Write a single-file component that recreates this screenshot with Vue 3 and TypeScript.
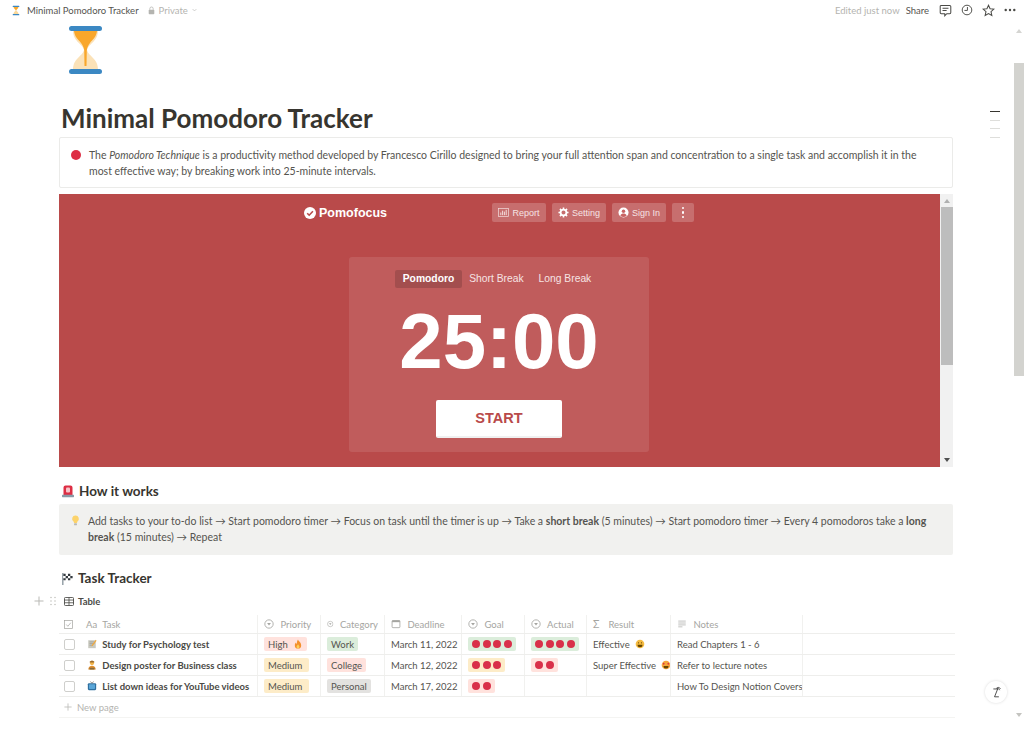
<template>
  <div class="page">
    <svg class="defs" width="0" height="0" aria-hidden="true">
      <symbol id="e-memo" viewBox="0 0 12 12">
        <rect x="1.500" y="1.500" width="9" height="9.500" fill="#c9c9c0" />
        <path d="M3 3.500h6M3 5.500h6M3 7.500h4" stroke="#8f8f88" stroke-width=".7" />
        <path d="M10.500 1 6 7l-.6 1.800L7 8l4.500-6z" fill="#f2a93b" />
      </symbol>
      <symbol id="e-person" viewBox="0 0 12 12">
        <circle cx="6" cy="3.600" r="2.600" fill="#f3b54a" />
        <path d="M3.300 3h5.400V1.800L6 .6 3.300 1.800z" fill="#9a6a2c" />
        <path d="M1.500 11.500c0-3 2-4.600 4.500-4.600s4.500 1.600 4.500 4.600z" fill="#e08f2e" />
        <rect x="3" y="9.300" width="6" height="2.200" fill="#8a6a3a" />
      </symbol>
      <symbol id="e-tv" viewBox="0 0 12 12">
        <rect x="1" y="2.600" width="10" height="8.400" rx="1.400" fill="#2f6f9f" />
        <rect x="2.400" y="4" width="7.200" height="5.600" rx=".8" fill="#5aa6d8" />
        <path d="M4 .8 6 2.600 8 .8" fill="none" stroke="#555" stroke-width=".8" />
      </symbol>
      <symbol id="e-fire" viewBox="0 0 12 12">
        <path d="M6 .6c.6 2.200 3.800 3.400 3.800 6.800A3.800 3.800 0 0 1 6 11.400a3.800 3.800 0 0 1-3.800-4c0-1.500.8-2.400 1.400-3.200.2 1 .6 1.500 1.100 1.700C4.500 4 5 2 6 .6z" fill="#f4902c" />
        <path d="M6 6.200c.5 1 1.700 1.600 1.700 3A1.700 1.700 0 0 1 6 11a1.700 1.700 0 0 1-1.700-1.800c0-1.300 1.200-1.700 1.700-3z" fill="#fcd05a" />
      </symbol>
      <symbol id="e-grin" viewBox="0 0 12 12">
        <circle cx="6" cy="6" r="5.200" fill="#f5bb41" />
        <circle cx="4.200" cy="4.600" r=".7" fill="#664500" />
        <circle cx="7.800" cy="4.600" r=".7" fill="#664500" />
        <path d="M3 6.800h6a3 3 0 0 1-6 0z" fill="#664500" />
      </symbol>
      <symbol id="e-love" viewBox="0 0 12 12">
        <circle cx="6" cy="6" r="5.200" fill="#f5a63b" />
        <path d="M2.300 4.300c.3-1.200 1.700-1.200 2 0 .1.800-1 1.600-1 1.600s-1.100-.8-1-1.600zM7.700 4.300c.3-1.200 1.700-1.200 2 0 .1.800-1 1.600-1 1.600s-1.100-.8-1-1.600z" fill="#dd2e44" />
        <path d="M3 7.200h6a3 3 0 0 1-6 0z" fill="#664500" />
      </symbol>
      <symbol id="i-select" viewBox="0 0 12 12">
        <circle cx="6" cy="6" r="5" fill="none" stroke="#a5a5a1" />
        <path d="M3.700 4.800h4.600L6 7.900z" fill="#a5a5a1" />
      </symbol>
      <symbol id="i-calendar" viewBox="0 0 12 12">
        <rect x="1.300" y="1.800" width="9.400" height="8.600" rx="1" fill="none" stroke="#a5a5a1" />
        <rect x="1.300" y="1.800" width="9.400" height="2" fill="#a5a5a1" />
      </symbol>
      <symbol id="i-lines" viewBox="0 0 12 12">
        <path d="M1.500 2.500h9M1.500 4.800h9M1.500 7.100h9M1.500 9.400h5" fill="none" stroke="#a5a5a1" stroke-width=".8" />
      </symbol>
    </svg>

    <header class="topbar">
      <div class="crumbs">
        <svg class="crumb-glass" viewBox="0 0 12 16" width="8" height="11">
          <path d="M2 2h8c0 4-3 4.500-3.600 6C7 9.500 10 10 10 14H2c0-4 3-4.500 3.600-6C5 6.500 2 6 2 2z" fill="#fbd99a" />
          <path d="M2.600 2.500h6.800C9.200 5 7 6 6 8 5 6 2.800 5 2.600 2.500z" fill="#f9a72b" />
          <rect x="1" y="1" width="10" height="1.700" rx=".8" fill="#3b88c3" />
          <rect x="1" y="13.300" width="10" height="1.700" rx=".8" fill="#3b88c3" />
        </svg>
        <span class="crumb-title">Minimal Pomodoro Tracker</span>
        <svg viewBox="0 0 10 12" width="7" height="9" class="crumb-lock">
          <path d="M2.600 5V3.400a2.400 2.400 0 0 1 4.800 0V5" fill="none" stroke="#b4b4b0" stroke-width="1.100" />
          <rect x="1" y="5" width="8" height="6.200" rx="1" fill="#b4b4b0" />
        </svg>
        <span class="crumb-private">Private</span>
        <svg viewBox="0 0 8 5" width="5" height="4"><path d="M1 1l3 3 3-3" fill="none" stroke="#b4b4b0" stroke-width="1" /></svg>
      </div>
      <div class="actions">
        <span class="edited">Edited just now</span>
        <span class="share">Share</span>
        <svg viewBox="0 0 14 14" width="13" height="13">
          <path d="M2.500 1.500h9a1.200 1.200 0 0 1 1.200 1.200v6.500a1.200 1.200 0 0 1-1.200 1.200H8.400L6.200 12.700v-2.300H2.500a1.200 1.200 0 0 1-1.200-1.200V2.700a1.200 1.200 0 0 1 1.200-1.200z" fill="none" stroke="#4a4a46" stroke-width="1.100" />
          <path d="M3.800 4.600h6.400M3.800 7h4.400" stroke="#4a4a46" stroke-width="1.100" />
        </svg>
        <svg viewBox="0 0 14 14" width="12" height="12">
          <circle cx="7" cy="7" r="5.600" fill="none" stroke="#4a4a46" stroke-width="1.100" />
          <path d="M7.500 3.500V7.500H4" fill="none" stroke="#4a4a46" stroke-width="1.100" />
        </svg>
        <svg viewBox="0 0 14 14" width="13" height="13">
          <path d="M7 1.300l1.700 3.800 4.100.4-3.100 2.700.9 4.100L7 10.200l-3.600 2.100.9-4.100L1.200 5.500l4.100-.4z" fill="none" stroke="#4a4a46" stroke-width="1.100" />
        </svg>
        <svg viewBox="0 0 14 4" width="12" height="4">
          <circle cx="2" cy="2" r="1.400" fill="#4a4a46" />
          <circle cx="7" cy="2" r="1.400" fill="#4a4a46" />
          <circle cx="12" cy="2" r="1.400" fill="#4a4a46" />
        </svg>
      </div>
    </header>

    <main class="doc">
      <svg class="page-icon" viewBox="0 0 33 50" width="33" height="50">
        <path d="M4 5h25c0 12-9 13-11 20 2 7 11 8 11 20H4c0-12 9-13 11-20C13 18 4 17 4 5z" fill="#fbe2b8" />
        <path d="M5 6h23c-.5 6-5 9-7 12-1.500 2-2.800 4-3.200 7l-.3 16h-2l-.3-16c-.4-3-1.700-5-3.200-7-2-3-6.500-6-7-12z" fill="#f9a72b" />
        <rect x="0" y="1" width="33" height="5" rx="2.500" fill="#3b88c3" />
        <rect x="0" y="44" width="33" height="5" rx="2.500" fill="#3b88c3" />
      </svg>

      <h1 class="title">Minimal Pomodoro Tracker</h1>

      <section class="callout outlined">
        <span class="red-dot"></span>
        <p>The <em>Pomodoro Technique</em> is a productivity method developed by Francesco Cirillo designed to bring your full attention span and concentration to a single task and accomplish it in the most effective way; by breaking work into 25-minute intervals.</p>
      </section>

      <section class="embed">
        <div class="pomo">
          <nav class="pomo-nav">
            <div class="pomo-logo">
              <svg viewBox="0 0 12 12" width="12" height="12">
                <circle cx="6" cy="6" r="6" fill="#fff" />
                <path d="M3.200 6.200 5.200 8.200 8.900 4.200" fill="none" stroke="#b94a4a" stroke-width="1.600" />
              </svg>
              <span>Pomofocus</span>
            </div>
            <div class="pomo-buttons">
              <span class="pomo-btn">
                <svg viewBox="0 0 12 10" width="11" height="9">
                  <rect x=".5" y=".5" width="11" height="9" fill="none" stroke="#f3dcdc" stroke-width=".8" />
                  <path d="M3 8V5M5 8V3M7 8V4M9 8V2" stroke="#f3dcdc" stroke-width="1.100" />
                </svg>
                Report
              </span>
              <span class="pomo-btn">
                <svg viewBox="0 0 12 12" width="11" height="11">
                  <circle cx="6" cy="6" r="3.200" fill="none" stroke="#fff" stroke-width="2" />
                  <path d="M6 .5v2M6 9.500v2M.5 6h2M9.500 6h2M2.100 2.100l1.400 1.400M8.500 8.500l1.400 1.400M2.100 9.900l1.400-1.400M8.500 3.500l1.400-1.400" stroke="#fff" stroke-width="1.700" />
                </svg>
                Setting
              </span>
              <span class="pomo-btn">
                <svg viewBox="0 0 12 12" width="11" height="11">
                  <circle cx="6" cy="6" r="5.500" fill="#fff" />
                  <circle cx="6" cy="4.600" r="1.900" fill="#c86464" />
                  <path d="M2.600 9.500c.6-1.700 2-2.300 3.400-2.300s2.800.6 3.400 2.300A4.800 4.800 0 0 1 6 11a4.800 4.800 0 0 1-3.400-1.500z" fill="#c86464" />
                </svg>
                Sign In
              </span>
              <span class="pomo-btn more">
                <i></i><i></i><i></i>
              </span>
            </div>
          </nav>

          <div class="timer-card">
            <div class="timer-tabs">
              <span class="timer-tab active">Pomodoro</span>
              <span class="timer-tab">Short Break</span>
              <span class="timer-tab">Long Break</span>
            </div>
            <div class="timer-time">25:00</div>
            <button class="timer-start" type="button">START</button>
          </div>
        </div>
        <div class="embed-scroll">
          <span class="tri up"></span>
          <span class="embed-thumb"></span>
          <span class="tri down"></span>
        </div>
      </section>

      <h2 class="heading first">
        <svg viewBox="0 0 14 14" width="14" height="14">
          <path d="M2.500 3.500a2 2 0 0 1 2-2h5a2 2 0 0 1 2 2V11h-9z" fill="#dd2e44" />
          <rect x="5" y="3.500" width="4" height="5" rx="1" fill="#f7c4c9" />
          <rect x="1" y="10.800" width="12" height="2.400" rx=".6" fill="#8899a6" />
        </svg>
        How it works
      </h2>

      <section class="callout filled">
        <svg class="bulb" viewBox="0 0 10 12" width="9" height="11">
          <path d="M5 .5a3.700 3.700 0 0 1 2.200 6.700c-.4.400-.5 1-.5 1.500H3.300c0-.5-.1-1.100-.5-1.500A3.700 3.700 0 0 1 5 .5z" fill="#fcd36b" />
          <rect x="3.400" y="9" width="3.200" height="2.200" rx=".6" fill="#b9b9b4" />
        </svg>
        <p>Add tasks to your to-do list → Start pomodoro timer → Focus on task until the timer is up → Take a <strong>short break</strong> (5 minutes) → Start pomodoro timer → Every 4 pomodoros take a <strong>long break</strong> (15 minutes) → Repeat</p>
      </section>

      <h2 class="heading second">
        <svg viewBox="0 0 14 14" width="13" height="13">
          <path d="M2 1v13" stroke="#66757f" stroke-width="1.100" />
          <path d="M2.500 2h10v7h-10z" fill="#fff" />
          <path d="M2.500 2H5v2.300H2.500zM7.500 2H10v2.300H7.500zM5 4.300h2.500v2.400H5zM10 4.300h2.500v2.400H10zM2.500 6.700H5V9H2.500zM7.500 6.700H10V9H7.500z" fill="#31373d" />
        </svg>
        Task Tracker
      </h2>

      <div class="view-bar">
        <div class="view-handles">
          <svg viewBox="0 0 10 10" width="10" height="10"><path d="M5 .5v9M.5 5h9" stroke="#b9b9b5" stroke-width="1" /></svg>
          <svg viewBox="0 0 6 10" width="6" height="10">
            <g fill="#c4c4c0">
              <circle cx="1" cy="1.500" r=".8" /><circle cx="5" cy="1.500" r=".8" />
              <circle cx="1" cy="5" r=".8" /><circle cx="5" cy="5" r=".8" />
              <circle cx="1" cy="8.500" r=".8" /><circle cx="5" cy="8.500" r=".8" />
            </g>
          </svg>
        </div>
        <svg viewBox="0 0 11 10" width="10" height="9">
          <rect x=".5" y=".5" width="10" height="9" rx="1" fill="none" stroke="#4a4a46" />
          <path d="M.5 3.400h10M.5 6.400h10M5.500 .5v9" stroke="#4a4a46" stroke-width=".9" />
        </svg>
        <span>Table</span>
      </div>

      <div class="table">
        <div class="tr head">
          <div class="td check-cell">
            <svg viewBox="0 0 10 10" width="9" height="9">
              <rect x=".5" y=".5" width="9" height="9" fill="none" stroke="#a5a5a1" stroke-width=".8" />
              <path d="M2.500 5 4.300 7 7.600 3" fill="none" stroke="#a5a5a1" stroke-width=".8" />
            </svg>
          </div>
          <div class="td"><span class="aa">Aa</span>Task</div>
          <div v-for="col in columns" :key="col.label" class="td">
            <span v-if="col.sigma" class="sigma">Σ</span>
            <svg v-else class="head-icon"><use :href="'#' + col.icon" /></svg>
            {{ col.label }}
          </div>
          <div class="td filler"></div>
        </div>

        <div v-for="row in rows" :key="row.task" class="tr">
          <div class="td check-cell"><span class="box"></span></div>
          <div class="td task">
            <svg class="emoji"><use :href="'#' + row.icon" /></svg>
            {{ row.task }}
          </div>
          <div class="td">
            <span class="tag" :class="row.priorityTone">
              {{ row.priority }}
              <svg v-if="row.priorityIcon" class="emoji small"><use :href="'#' + row.priorityIcon" /></svg>
            </span>
          </div>
          <div class="td"><span class="tag" :class="row.categoryTone">{{ row.category }}</span></div>
          <div class="td">{{ row.deadline }}</div>
          <div class="td">
            <span class="tag dots" :class="row.goalTone"><i v-for="n in row.goal" :key="n"></i></span>
          </div>
          <div class="td">
            <span v-if="row.actual" class="tag dots" :class="row.actualTone"><i v-for="n in row.actual" :key="n"></i></span>
          </div>
          <div class="td result">
            {{ row.result }}
            <svg v-if="row.resultIcon" class="emoji small"><use :href="'#' + row.resultIcon" /></svg>
          </div>
          <div class="td">{{ row.notes }}</div>
          <div class="td filler"></div>
        </div>

        <div class="new-page">
          <svg viewBox="0 0 10 10" width="8" height="8"><path d="M5 .5v9M.5 5h9" stroke="#b9b9b5" stroke-width="1" /></svg>
          New page
        </div>
      </div>
    </main>

    <aside class="toc">
      <i class="on"></i><i></i><i></i><i></i>
    </aside>

    <div class="page-scroll">
      <span class="tri up light"></span>
      <span class="page-thumb"></span>
      <span class="tri down light"></span>
    </div>

    <div class="help">
      <svg viewBox="0 0 14 16" width="11" height="13">
        <path d="M3 3.500h5.500L4.500 13.500H10M7 2.500c1.500-1.500 4-1.200 5 .8M7.500 3c1.500-.3 3 .3 3.500 2" fill="none" stroke="#222" stroke-width="1" />
      </svg>
    </div>
  </div>
</template>

<script setup lang="ts">
interface Column {
  label: string
  icon?: string
  sigma?: boolean
}

interface Row {
  icon: string
  task: string
  priority: string
  priorityTone: string
  priorityIcon?: string
  category: string
  categoryTone: string
  deadline: string
  goal: number
  goalTone: string
  actual: number
  actualTone: string
  result: string
  resultIcon?: string
  notes: string
}

const columns: Column[] = [
  { label: 'Priority', icon: 'i-select' },
  { label: 'Category', icon: 'i-select' },
  { label: 'Deadline', icon: 'i-calendar' },
  { label: 'Goal', icon: 'i-select' },
  { label: 'Actual', icon: 'i-select' },
  { label: 'Result', sigma: true },
  { label: 'Notes', icon: 'i-lines' }
]

const rows: Row[] = [
  {
    icon: 'e-memo',
    task: 'Study for Psychology test',
    priority: 'High',
    priorityTone: 'red',
    priorityIcon: 'e-fire',
    category: 'Work',
    categoryTone: 'green',
    deadline: 'March 11, 2022',
    goal: 4,
    goalTone: 'green',
    actual: 4,
    actualTone: 'green',
    result: 'Effective',
    resultIcon: 'e-grin',
    notes: 'Read Chapters 1 - 6'
  },
  {
    icon: 'e-person',
    task: 'Design poster for Business class',
    priority: 'Medium',
    priorityTone: 'yellow',
    category: 'College',
    categoryTone: 'red',
    deadline: 'March 12, 2022',
    goal: 3,
    goalTone: 'yellow',
    actual: 2,
    actualTone: 'red',
    result: 'Super Effective',
    resultIcon: 'e-love',
    notes: 'Refer to lecture notes'
  },
  {
    icon: 'e-tv',
    task: 'List down ideas for YouTube videos',
    priority: 'Medium',
    priorityTone: 'yellow',
    category: 'Personal',
    categoryTone: 'gray',
    deadline: 'March 17, 2022',
    goal: 2,
    goalTone: 'red',
    actual: 0,
    actualTone: '',
    result: '',
    notes: 'How To Design Notion Covers'
  }
]
</script>

<style>
html,
body {
  margin: 0;
  background: #fff;
  overflow: hidden;
}
</style>

<style scoped>
.page {
  position: relative;
  width: 1024px;
  height: 734px;
  overflow: hidden;
  background: #fff;
  color: #55544f;
  font-family: Lato, "Noto Sans", "Liberation Sans", sans-serif;
  font-size: 10.500px;
}

.defs {
  position: absolute;
}

.topbar {
  display: flex;
  justify-content: space-between;
  align-items: center;
  height: 20px;
  padding: 0 8px 0 12px;
}

.crumbs,
.actions {
  display: flex;
  align-items: center;
}

.crumb-title {
  margin-left: 7px;
  font-size: 9.500px;
  color: #55544f;
}

.crumb-lock {
  margin-left: 9px;
}

.crumb-private {
  margin: 0 4px;
  font-size: 9.500px;
  color: #b4b4b0;
}

.actions {
  gap: 9px;
}

.edited {
  font-size: 9.500px;
  color: #b4b4b0;
  margin-right: -3px;
}

.share {
  font-size: 9.500px;
  color: #55544f;
  margin-right: 1px;
}

.doc {
  width: 894px;
  margin-left: 59px;
}

.page-icon {
  display: block;
  margin: 5px 0 0 10px;
}

.title {
  margin: 28px 0 0 2px;
  font-size: 26px;
  line-height: 30px;
  font-weight: 700;
  color: #37352f;
}

.callout {
  box-sizing: border-box;
  display: flex;
  align-items: flex-start;
  height: 51px;
  border-radius: 2px;
  padding: 9px 16px 0 0;
}

.callout p {
  margin: 0;
  font-size: 10.500px;
  line-height: 16px;
  color: #55544f;
}

.callout strong {
  font-weight: 700;
}

.outlined {
  margin-top: 4px;
  border: 1px solid #ebebe9;
  padding-left: 11px;
}

.red-dot {
  flex: none;
  width: 10px;
  height: 10px;
  margin: 3px 8px 0 0;
  border-radius: 50%;
  background: #dd2e44;
}

.filled {
  background: #f1f1ef;
  padding-left: 12px;
  padding-top: 9px;
}

.bulb {
  flex: none;
  margin: 2px 8px 0 0;
}

.embed {
  display: flex;
  height: 273px;
  margin-top: 6px;
}

.pomo {
  flex: 1;
  background: #b94a4a;
  padding-top: 9px;
  color: #fff;
  font-family: "Liberation Sans", Arial, sans-serif;
}

.pomo-nav {
  display: flex;
  align-items: center;
  height: 19px;
  padding-left: 245px;
}

.pomo-logo {
  display: flex;
  align-items: center;
  gap: 3px;
  width: 188px;
  font-size: 12.500px;
  font-weight: 700;
}

.pomo-buttons {
  display: flex;
  gap: 6px;
}

.pomo-btn {
  display: flex;
  align-items: center;
  justify-content: center;
  gap: 3px;
  width: 54px;
  height: 19px;
  border-radius: 2px;
  background: rgba(255, 255, 255, 0.2);
  font-size: 9px;
  color: #f6e4e4;
}

.pomo-btn.more {
  flex-direction: column;
  gap: 2px;
  width: 22px;
}

.pomo-btn.more i {
  width: 2.500px;
  height: 2.500px;
  border-radius: 50%;
  background: #fff;
}

.timer-card {
  box-sizing: border-box;
  width: 300px;
  height: 195px;
  margin: 35px 0 0 290px;
  padding-top: 13px;
  border-radius: 3px;
  background: rgba(255, 255, 255, 0.1);
  text-align: center;
}

.timer-tabs {
  display: flex;
  justify-content: center;
  padding-right: 4px;
}

.timer-tab {
  padding: 0 7.500px;
  line-height: 18px;
  border-radius: 2px;
  font-size: 10.300px;
  color: #f6e4e4;
}

.timer-tab.active {
  background: rgba(0, 0, 0, 0.15);
  font-weight: 700;
  color: #fff;
}

.timer-time {
  margin-top: 11px;
  font-size: 78px;
  line-height: 85px;
  font-weight: 700;
}

.timer-start {
  display: block;
  box-sizing: border-box;
  width: 126px;
  height: 38px;
  margin: 16px auto 0;
  border: 0;
  border-bottom: 2px solid #f0f0f0;
  border-radius: 2px;
  background: #fff;
  color: #b94a4a;
  font-family: inherit;
  font-size: 14.500px;
  font-weight: 700;
}

.embed-scroll {
  display: flex;
  flex-direction: column;
  align-items: center;
  width: 13px;
  background: #f1f1f1;
}

.embed-thumb {
  width: 12px;
  height: 158px;
  margin-top: 4px;
  background: #bdbdbd;
}

.tri {
  flex: none;
  width: 0;
  height: 0;
  border-left: 3.500px solid transparent;
  border-right: 3.500px solid transparent;
}

.tri.up {
  margin-top: 5px;
  border-bottom: 4px solid #b0b0b0;
}

.tri.down {
  margin-top: auto;
  margin-bottom: 5px;
  border-top: 4px solid #505050;
}

.heading {
  display: flex;
  align-items: center;
  gap: 4px;
  margin: 0 0 0 2px;
  font-size: 13.500px;
  line-height: 18px;
  font-weight: 700;
  color: #37352f;
}

.heading.first {
  margin-top: 15px;
  margin-bottom: 4px;
}

.heading.second {
  margin-top: 14px;
}

.view-bar {
  position: relative;
  display: flex;
  align-items: center;
  gap: 4px;
  height: 14px;
  margin: 7px 0 0 5px;
  font-size: 9.500px;
  font-weight: 700;
  color: #4a4a46;
}

.view-handles {
  position: absolute;
  left: -30px;
  display: flex;
  align-items: center;
  gap: 6px;
}

.table {
  width: 896px;
  margin-top: 7px;
  font-size: 9.500px;
}

.tr {
  display: grid;
  grid-template-columns: 21px 178px 63px 64px 77px 63px 62px 84px 132px 152px;
  height: 21px;
  border-bottom: 1px solid #eeeeec;
  box-sizing: border-box;
}

.head {
  height: 19px;
  color: #a5a5a1;
}

.td {
  display: flex;
  align-items: center;
  box-sizing: border-box;
  padding: 0 6px;
  border-right: 1px solid #f1f1ef;
  white-space: pre;
  overflow: hidden;
}

.td:first-child {
  padding: 0 0 0 5px;
  border-right: 0;
}

.filler {
  border-right: 0;
}

.head .td {
  gap: 4px;
}

.aa {
  color: #a5a5a1;
  margin-right: 1px;
}

.sigma {
  font-size: 10.500px;
  width: 9px;
}

.head-icon {
  width: 10px;
  height: 10px;
}

.box {
  width: 9px;
  height: 9px;
  border: 1px solid #cfcfcc;
  border-radius: 2px;
}

.task {
  font-weight: 700;
  color: #4a4945;
  padding-left: 7px;
}

.emoji {
  flex: none;
  width: 10px;
  height: 10px;
  margin-right: 3px;
}

.emoji.small {
  margin: 0 0 0 3px;
}

.tag {
  display: inline-flex;
  align-items: center;
  height: 14px;
  padding: 0 4px;
  border-radius: 2px;
}

.tag.red {
  background: #ffe2dd;
}

.tag.yellow {
  background: #fdecc8;
}

.tag.green {
  background: #dbeddb;
}

.tag.gray {
  background: #e3e2e0;
}

.tag.dots {
  gap: 2.500px;
}

.tag.dots i {
  width: 8px;
  height: 8px;
  border-radius: 50%;
  background: #d9304a;
}

.new-page {
  display: flex;
  align-items: center;
  gap: 5px;
  height: 20px;
  padding-left: 5px;
  border-bottom: 1px solid #f4f4f2;
  color: #b4b4b0;
}

.toc {
  position: absolute;
  left: 990px;
  top: 111px;
  display: flex;
  flex-direction: column;
  gap: 7.700px;
  width: 10px;
}

.toc i {
  height: 1px;
  background: #dededb;
}

.toc i.on {
  background: #37352f;
}

.page-scroll {
  position: absolute;
  top: 0;
  right: 0;
  bottom: 0;
  display: flex;
  flex-direction: column;
  align-items: center;
  width: 10px;
}

.tri.up.light {
  margin-top: 29px;
  border-bottom-color: #d5d5d2;
}

.tri.down.light {
  margin-bottom: 17px;
  border-top-color: #c4c4c0;
}

.page-thumb {
  width: 10px;
  height: 313px;
  margin-top: 30px;
  background: #d3d3cf;
}

.help {
  position: absolute;
  left: 985px;
  top: 681px;
  display: flex;
  align-items: center;
  justify-content: center;
  width: 22px;
  height: 22px;
  border-radius: 50%;
  background: #fff;
  box-shadow: 0 0 3px rgba(0, 0, 0, 0.15);
}
</style>
